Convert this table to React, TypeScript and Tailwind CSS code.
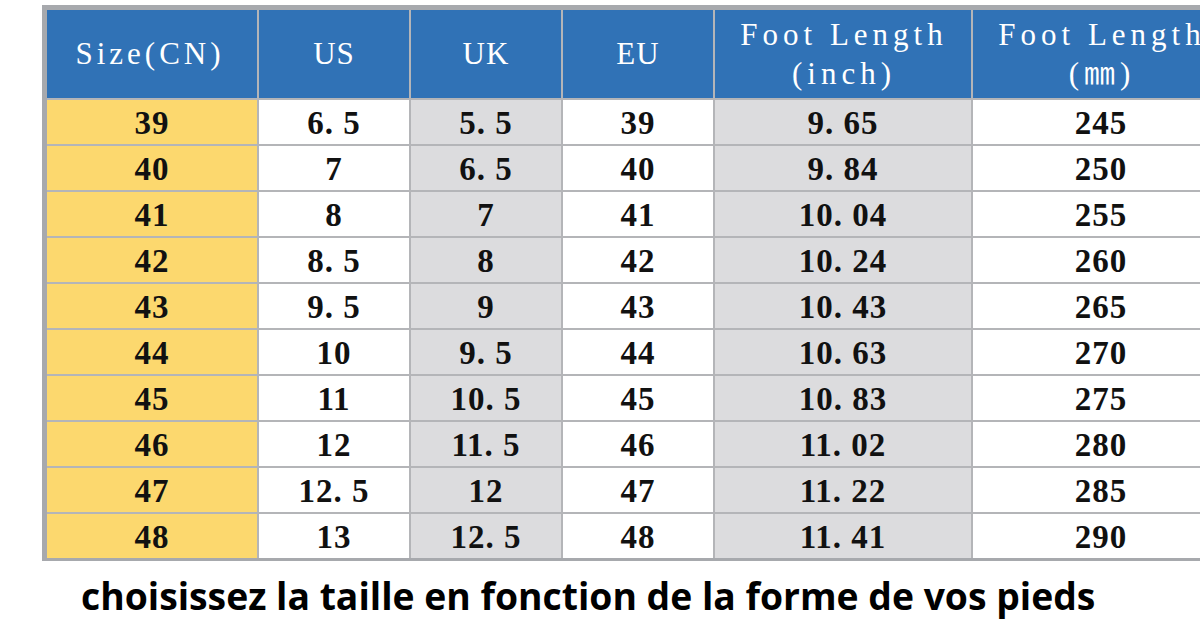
import React from "react";

const rows: string[][] = [
  ["39", "6. 5", "5. 5", "39", "9. 65", "245"],
  ["40", "7", "6. 5", "40", "9. 84", "250"],
  ["41", "8", "7", "41", "10. 04", "255"],
  ["42", "8. 5", "8", "42", "10. 24", "260"],
  ["43", "9. 5", "9", "43", "10. 43", "265"],
  ["44", "10", "9. 5", "44", "10. 63", "270"],
  ["45", "11", "10. 5", "45", "10. 83", "275"],
  ["46", "12", "11. 5", "46", "11. 02", "280"],
  ["47", "12. 5", "12", "47", "11. 22", "285"],
  ["48", "13", "12. 5", "48", "11. 41", "290"],
];

const colBg = [
  "bg-[#fcd86e]",
  "bg-white",
  "bg-[#dcdcde]",
  "bg-white",
  "bg-[#dcdcde]",
  "bg-white",
];

const headSerif = { fontFamily: '"Liberation Serif", "Times New Roman", serif' };

export default function App() {
  return (
    <div className="w-[1200px] h-[627px] overflow-hidden bg-white relative">
      <div className="pl-[42px] pt-[5px]">
        <div className="w-[1240px] bg-[#a7a9ad] pl-[5px] pt-[5px] pb-[3px]">
          <div
            className="grid gap-[2px] bg-[#b4b5b8] grid-cols-[210px_150px_150px_150px_256px_256px] grid-rows-[88px_repeat(10,44px)]"
            style={headSerif}
          >
            <div className="bg-[#3072b6] flex items-center justify-center text-white text-[31px] tracking-[4px] pr-[4px]">
              Size(CN)
            </div>
            <div className="bg-[#3072b6] flex items-center justify-center text-white text-[31px] tracking-[1px]">
              US
            </div>
            <div className="bg-[#3072b6] flex items-center justify-center text-white text-[31px] tracking-[1px]">
              UK
            </div>
            <div className="bg-[#3072b6] flex items-center justify-center text-white text-[31px] tracking-[1px]">
              EU
            </div>
            <div className="bg-[#3072b6] flex flex-col items-center justify-center text-white text-[31px] tracking-[5px] leading-[39px] pl-[2px]">
              <span>Foot Length</span>
              <span>(inch)</span>
            </div>
            <div className="bg-[#3072b6] flex flex-col items-center justify-center text-white text-[31px] tracking-[5px] leading-[39px] pl-[2px]">
              <span>Foot Length</span>
              <span style={{ fontFamily: '"Liberation Serif", "Noto Sans CJK SC", serif' }}>(㎜)</span>
            </div>
            {rows.map((r, i) =>
              r.map((v, j) => (
                <div
                  key={`${i}-${j}`}
                  className={`${colBg[j]} flex items-center justify-center text-[#111] font-bold text-[33px] tracking-[1px] pt-[3px]`}
                >
                  {v}
                </div>
              ))
            )}
          </div>
        </div>
      </div>
      <div
        className="pl-[81px] pt-[13px] text-black font-bold text-[37.3px] leading-[44px]"
        style={{ fontFamily: '"Open Sans", "Noto Sans", sans-serif' }}
      >
        choisissez la taille en fonction de la forme de vos pieds
      </div>
    </div>
  );
}
